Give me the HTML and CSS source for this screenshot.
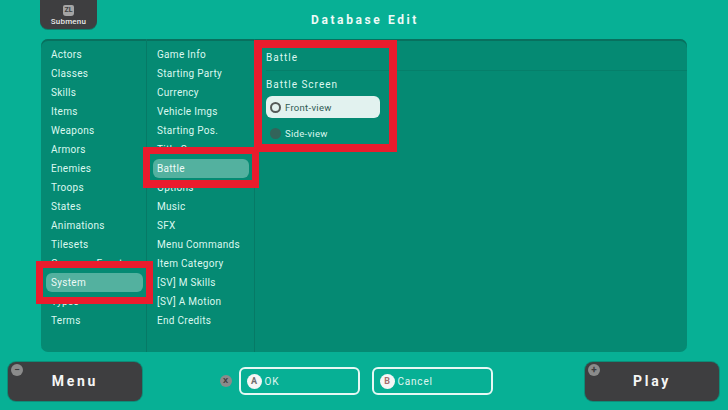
FILE: index.html
```html
<!DOCTYPE html>
<html lang="en">
<head>
<meta charset="utf-8">
<title>Database Edit</title>
<link rel="stylesheet" href="styles.css">
</head>
<body>
<div class="screen">
  <header class="top">
    <div class="submenu"><span class="zl">ZL</span><span class="submenu-label">Submenu</span></div>
    <h1 class="title">Database Edit</h1>
  </header>
  <main class="panel">
    <ul class="list list-a">
      <li>Actors</li><li>Classes</li><li>Skills</li><li>Items</li><li>Weapons</li><li>Armors</li><li>Enemies</li><li>Troops</li><li>States</li><li>Animations</li><li>Tilesets</li><li>Common Events</li><li class="selected">System</li><li>Types</li><li>Terms</li>
    </ul>
    <ul class="list list-b">
      <li>Game Info</li><li>Starting Party</li><li>Currency</li><li>Vehicle Imgs</li><li>Starting Pos.</li><li>Title Screen</li><li class="selected">Battle</li><li>Options</li><li>Music</li><li>SFX</li><li>Menu Commands</li><li>Item Category</li><li>[SV] M Skills</li><li>[SV] A Motion</li><li>End Credits</li>
    </ul>
    <section class="detail">
      <div class="detail-head">Battle</div>
      <div class="group-label">Battle Screen</div>
      <div class="option active"><span class="radio"></span>Front-view</div>
      <div class="option"><span class="radio off"></span>Side-view</div>
    </section>
  </main>
  <footer class="bottom">
    <div class="big-btn"><span class="corner">&#8722;</span>Menu</div>
    <div class="actions">
      <span class="x-key">X</span>
      <div class="outline-btn"><span class="key key-a">A</span>OK</div>
      <div class="outline-btn"><span class="key key-b">B</span>Cancel</div>
    </div>
    <div class="big-btn"><span class="corner">+</span>Play</div>
  </footer>
  <div class="mark mark-system"></div>
  <div class="mark mark-battle"></div>
  <div class="mark mark-detail"></div>
</div>
</body>
</html>
```

FILE: styles.css
```css
* { box-sizing: border-box; }
html, body { margin: 0; padding: 0; }
body { width: 728px; height: 410px; overflow: hidden; font-family: Roboto, "Noto Sans", sans-serif; }
.screen { position: relative; width: 728px; height: 410px; background: #07b095; display: flex; flex-direction: column; overflow: hidden; }

.top { height: 39px; position: relative; display: flex; justify-content: center; }
.submenu { position: absolute; top: 0; left: 40px; width: 57px; height: 29px; background: #3e3e40; border-radius: 0 0 8px 8px; display: flex; flex-direction: column; align-items: center; padding-top: 5px; box-shadow: 0 1px 0 #0b7f6c; }
.zl { width: 11px; height: 11px; background: #a5a5a5; border-radius: 2px 2px 3px 3px; color: #3e3e40; font-size: 7px; font-weight: 700; line-height: 11px; text-align: center; }
.submenu-label { color: #e8e8e8; font-size: 8px; font-weight: 500; line-height: 10px; margin-top: 1px; letter-spacing: .2px; }
.title { margin: 10px 0 0 2px; color: #eefaf7; font-size: 12px; line-height: 20px; font-weight: 700; letter-spacing: 2.6px; }

.panel { margin-left: 41px; width: 646px; height: 313px; background: #058a73; border-radius: 7px; box-shadow: inset 0 2px 0 #08705e; display: grid; grid-template-columns: 106px 108px 1fr; }
.list { list-style: none; margin: 0; padding: 6px 3px 0 5px; border-right: 1px solid #067a66; color: #dcf8f0; font-size: 10px; font-weight: 400; letter-spacing: .3px; }
.list-b { padding-left: 6px; padding-right: 5px; }
.list li { height: 19px; line-height: 19px; padding-left: 5px; border-radius: 6px; white-space: nowrap; }
.list-b li { padding-left: 4px; }
.list li.selected { background: #53b19f; color: #eefaf7; }

.detail { padding: 9px 0 0 11px; color: #dcf8f0; }
.detail-head { height: 23px; line-height: 20px; font-size: 10px; font-weight: 400; letter-spacing: 1px; border-bottom: 1px solid #067f6a; }
.group-label { margin-top: 5px; height: 20px; line-height: 18px; font-size: 10px; font-weight: 400; letter-spacing: 1px; }
.option { width: 114px; height: 22px; margin-bottom: 4px; padding-left: 4px; display: flex; align-items: center; gap: 4px; font-size: 9.5px; font-weight: 400; letter-spacing: .3px; border-radius: 6px; }
.option.active { background: #e2f2ef; color: #2f5a53; }
.radio { width: 11px; height: 11px; border-radius: 50%; background: #e2f2ef; border: 2.5px solid #555a58; }
.radio.off { background: #33645a; border: 0; }

.bottom { flex: 1; display: flex; justify-content: space-between; align-items: flex-start; padding: 10px 9px 0 8px; }
.big-btn { position: relative; width: 134px; height: 39px; background: #3e3e40; border-radius: 8px; box-shadow: 0 0 0 1px #0d8c78; color: #f5f5f5; font-size: 14px; font-weight: 700; letter-spacing: 2.7px; line-height: 38px; text-align: center; }
.corner { position: absolute; left: 3px; top: 2px; width: 12px; height: 12px; border-radius: 50%; background: #8b8b8b; color: #3e3e40; font-size: 10px; line-height: 11px; letter-spacing: 0; font-weight: 700; }
.actions { display: flex; align-items: center; margin-top: 5px; margin-right: 15px; }
.x-key { width: 12px; height: 12px; border-radius: 50%; background: #8b8b8b; color: #3e3e40; font-size: 8px; font-weight: 700; line-height: 12px; text-align: center; margin-right: 7px; }
.outline-btn { width: 121px; height: 28px; border: 2px solid #e6f8f4; border-radius: 6px; display: flex; align-items: center; gap: 3px; padding-left: 6px; color: #e0f6f1; font-size: 10px; font-weight: 400; letter-spacing: .8px; }
.outline-btn + .outline-btn { margin-left: 12px; }
.key { width: 15px; height: 15px; border-radius: 50%; background: #f6f6f6; font-size: 9px; font-weight: 700; line-height: 15px; text-align: center; letter-spacing: 0; }
.key-a { color: #6d6d6d; }
.key-b { color: #a56d6d; }

.mark { position: absolute; border: 7px solid #ea1c2d; }
.mark-system { left: 36px; top: 261px; width: 117px; height: 43px; }
.mark-battle { left: 143px; top: 147px; width: 116px; height: 41px; border-width: 7px 7px 8px; }
.mark-detail { left: 254px; top: 40px; width: 143px; height: 112px; border-width: 8px; }
```
